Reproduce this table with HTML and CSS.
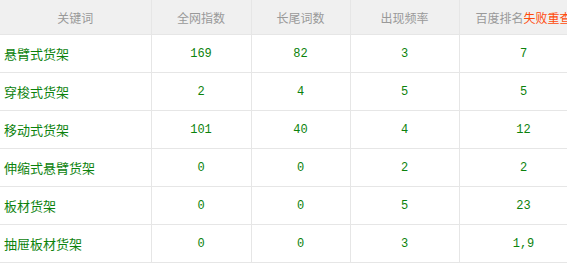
FILE: index.html
```html
<!DOCTYPE html>
<html lang="zh">
<head>
<meta charset="utf-8">
<link rel="stylesheet" href="styles.css">
</head>
<body>
<table class="kw-table">
  <colgroup>
    <col class="c1"><col class="c2"><col class="c3"><col class="c4"><col class="c5">
  </colgroup>
  <thead>
    <tr>
      <th>关键词</th>
      <th>全网指数</th>
      <th>长尾词数</th>
      <th>出现频率</th>
      <th class="nowrap">百度排名<a class="retry">失败重查</a></th>
    </tr>
  </thead>
  <tbody>
    <tr><td class="kw">悬臂式货架</td><td class="num">169</td><td class="num">82</td><td class="num">3</td><td class="num">7</td></tr>
    <tr><td class="kw">穿梭式货架</td><td class="num">2</td><td class="num">4</td><td class="num">5</td><td class="num">5</td></tr>
    <tr><td class="kw">移动式货架</td><td class="num">101</td><td class="num">40</td><td class="num">4</td><td class="num">12</td></tr>
    <tr><td class="kw">伸缩式悬臂货架</td><td class="num">0</td><td class="num">0</td><td class="num">2</td><td class="num">2</td></tr>
    <tr><td class="kw">板材货架</td><td class="num">0</td><td class="num">0</td><td class="num">5</td><td class="num">23</td></tr>
    <tr><td class="kw">抽屉板材货架</td><td class="num">0</td><td class="num">0</td><td class="num">3</td><td class="num">1,9</td></tr>
  </tbody>
</table>
</body>
</html>
```
FILE: styles.css
```css
html, body {
  margin: 0;
  padding: 0;
  background: #fff;
  overflow: hidden;
}
.kw-table {
  border-collapse: collapse;
  table-layout: fixed;
  width: 588px;
  font-family: "Noto Sans CJK SC", "Liberation Sans", sans-serif;
}
.c1 { width: 151px; }
.c2 { width: 100px; }
.c3 { width: 99px; }
.c4 { width: 109px; }
.c5 { width: 129px; }
.kw-table th {
  height: 34px;
  padding: 0;
  background: #f0f0f0;
  color: #999;
  font-weight: normal;
  font-size: 12px;
  text-align: center;
  border: 1px solid #e6e6e6;
  border-top: none;
}
.kw-table th:first-child, .kw-table td:first-child { border-left: none; }
.nowrap { white-space: nowrap; }
.retry { color: #ff4a0a; }
.kw-table td {
  height: 37px;
  padding: 0;
  border: 1px solid #e6e6e6;
  color: #0c820c;
}
.kw {
  font-size: 13px;
  padding-left: 4px !important;
  text-align: left;
}
.num {
  font-family: "Liberation Mono", monospace;
  font-size: 12px;
  text-align: center;
}
```
